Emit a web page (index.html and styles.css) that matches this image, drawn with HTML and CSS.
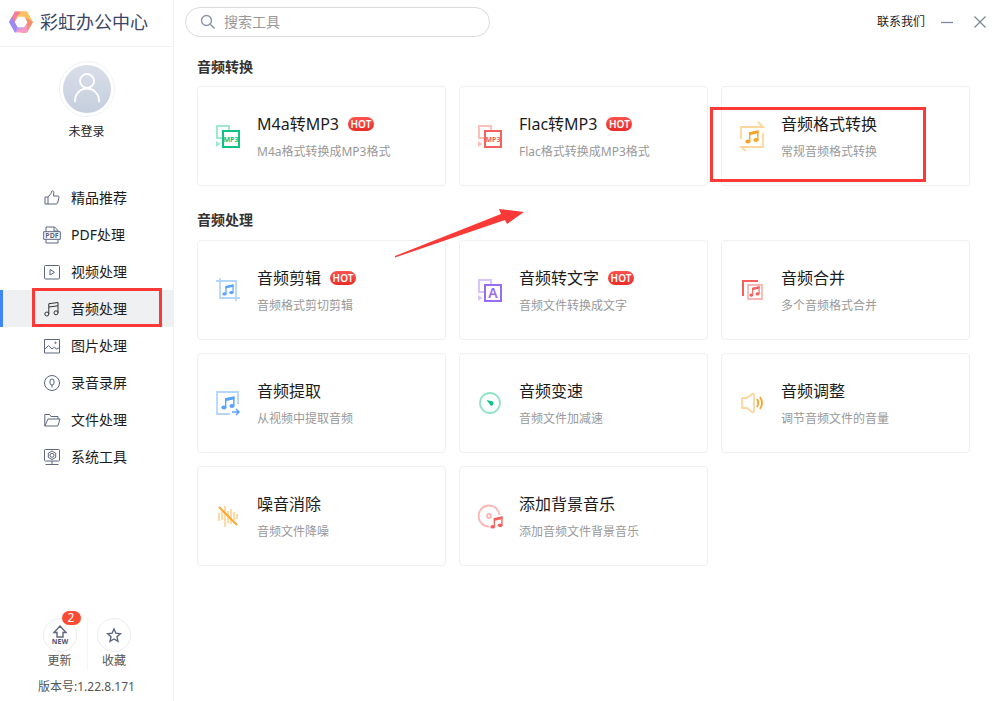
FILE: index.html
```html
<!DOCTYPE html>
<html lang="zh-CN">
<head>
<meta charset="utf-8">
<meta name="viewport" content="width=device-width, initial-scale=1">
<title>彩虹办公中心</title>
<link rel="stylesheet" href="styles.css">
</head>
<body>
<svg class="defs" aria-hidden="true">
  <symbol id="note" viewBox="0 0 12 12">
    <path d="M4 9.800V2.500l7-1.600v7.600" fill="none" stroke="currentColor" stroke-width="1.200"/>
    <path d="M3.500 2.200l8-1.800v2.400l-8 1.800z" fill="currentColor"/>
    <ellipse cx="2.500" cy="9.900" rx="2.200" ry="1.700" fill="currentColor"/>
    <ellipse cx="9.400" cy="8.600" rx="2.200" ry="1.700" fill="currentColor"/>
  </symbol>
  <symbol id="swap" viewBox="0 0 26 26">
    <path d="M7 15H2V3h12v4" fill="none" stroke="currentColor" stroke-width="2" opacity=".4"/>
    <path d="M1 18l4.500 3L1 24z" fill="currentColor" opacity=".4"/>
    <path d="M8 8h16v16H8z" fill="none" stroke="currentColor" stroke-width="2"/>
  </symbol>
</svg>
<div class="app">
  <aside class="sidebar">
    <div class="brand">
      <svg class="logo" viewBox="0 0 24 24" aria-hidden="true">
        <path d="M6 1.500h12L15 7H9L6 14 0.500 12z" fill="#f8a57f"/>
        <path d="M18 1.500L24 12l-4 5-3.500-10L9 7l-3-5.500z" fill="#fbc060"/>
        <path d="M24 12l-6 10.500-6 .5 5-6 1.500-5-3-5z" fill="#f88b6b"/>
        <path d="M18 22.500H6L3.500 17H15l3.500-5z" fill="#f59ac0"/>
        <path d="M6 22.500L0 12l4-5 3.500 10H15z" fill="#c79af4"/>
        <path d="M0 12L6 1.500 12 2 7 7l-1.500 5 3 5z" fill="#f37d9c"/>
        <path d="M0 12l3-5 2.500 5 3 5L6 22.500z" fill="#9a8cf4"/>
        <path d="M9 6.800h6l3.200 5.200-3.200 5.200H9L5.800 12z" fill="#fff"/>
      </svg>
      <h1 class="brand-name">彩虹办公中心</h1>
    </div>
    <div class="user">
      <button class="avatar" type="button" aria-label="登录">
        <svg viewBox="0 0 48 48" fill="none" stroke="#fff" stroke-width="1.800" stroke-linecap="round" aria-hidden="true">
          <circle cx="24" cy="16" r="7"/><path d="M12 36.500v-1a12 12 0 0 1 24 0v1"/>
        </svg>
      </button>
      <span class="user-name">未登录</span>
    </div>
    <nav class="nav">
      <a class="nav-item" href="#"><svg viewBox="0 0 18 18"><path d="M2 8h3v7H2zM5 8l3-3.500.6-2.200c.2-.9 2.400-.7 2.200 1.200L10.500 7H15q1.300.2 1 1.500l-1.400 5.500q-.4 1-1.500 1H5"/></svg>精品推荐</a>
      <a class="nav-item" href="#"><svg viewBox="0 0 18 18"><path d="M3 5.500V1h8.500L15 4.500v1M11 1v4h4M3 13.500V17h12v-3.500M.7 5.700h16.600v7.600H.7z"/><text x="9" y="12" text-anchor="middle" class="pdf-label">PDF</text></svg>PDF处理</a>
      <a class="nav-item" href="#"><svg viewBox="0 0 18 18"><rect x="1.500" y="2.500" width="15" height="13.500" rx="1"/><path d="M7 6.500v5.500l4.500-2.700z"/></svg>视频处理</a>
      <a class="nav-item active" href="#" aria-current="page"><svg viewBox="0 0 18 18"><circle cx="3.800" cy="14" r="2"/><circle cx="13" cy="12.800" r="2"/><path d="M5.800 14V3.700L15 2.500v10.300M5.800 7L15 5.800"/></svg>音频处理<span class="mark nav-mark"></span></a>
      <a class="nav-item" href="#"><svg viewBox="0 0 18 18"><path d="M1.500 2.500h15v13.500h-15zM1.500 12.500l4-4 3.500 3.500 2.500-2 2 2.200 3-1.700"/><circle cx="12.500" cy="5.800" r=".7"/></svg>图片处理</a>
      <a class="nav-item" href="#"><svg viewBox="0 0 18 18"><circle cx="9" cy="9" r="7.500"/><rect x="7" y="5" width="4" height="6" rx="2"/><path d="M9 11v2.500"/></svg>录音录屏</a>
      <a class="nav-item" href="#"><svg viewBox="0 0 18 18"><path d="M1.800 15V3.500h4.700L8 5.500h7V8M1.800 15L5 8h12l-2.200 7z"/></svg>文件处理</a>
      <a class="nav-item" href="#"><svg viewBox="0 0 18 18"><rect x="1.500" y="1.500" width="15" height="11.500" rx=".8"/><path d="M9 13v3.500M2.500 16.500h13"/><path d="M9 3l3.700 2.200v4.200L9 11.500 5.300 9.400V5.200z"/><circle cx="9" cy="7.300" r="2"/></svg>系统工具</a>
    </nav>
    <footer class="side-foot">
      <div class="quick">
        <button class="quick-item" type="button">
          <span class="ring">
            <svg viewBox="0 0 24 24" aria-hidden="true"><path d="M12 3l6 6.500h-3V14H9V9.500H6z"/><text x="12" y="21" text-anchor="middle" class="new-label">NEW</text></svg>
            <span class="count">2</span>
          </span>
          更新
        </button>
        <button class="quick-item" type="button">
          <span class="ring">
            <svg viewBox="0 0 24 24" aria-hidden="true"><path d="M12 6l1.900 4.200 4.500.5-3.400 3.100 1 4.500-4-2.300-4 2.300 1-4.500-3.400-3.100 4.500-.5z"/></svg>
          </span>
          收藏
        </button>
      </div>
      <p class="version">版本号:1.22.8.171</p>
    </footer>
  </aside>

  <main class="main">
    <header class="topbar">
      <label class="search">
        <svg viewBox="0 0 16 16" aria-hidden="true"><circle cx="6.500" cy="6.500" r="5"/><path d="M10.300 10.300l4.200 4.200"/></svg>
        <input type="text" placeholder="搜索工具" aria-label="搜索工具">
      </label>
      <div class="window-tools">
        <a class="contact" href="#">联系我们</a>
        <button class="win-btn" type="button" aria-label="最小化"><svg viewBox="0 0 14 14"><path d="M1 7.500h12"/></svg></button>
        <button class="win-btn" type="button" aria-label="关闭"><svg viewBox="0 0 14 14"><path d="M1.500 1.500l11 11M12.500 1.500l-11 11"/></svg></button>
      </div>
    </header>

    <section class="group">
      <h2 class="group-title">音频转换</h2>
      <div class="grid">
        <button class="card" type="button">
          <svg class="icon green" viewBox="0 0 26 26"><use href="#swap"/><text x="16" y="19" text-anchor="middle" class="mp3-label">MP3</text></svg>
          <span class="info"><span class="name">M4a转MP3<span class="hot">HOT</span></span><span class="desc">M4a格式转换成MP3格式</span></span>
        </button>
        <button class="card" type="button">
          <svg class="icon red" viewBox="0 0 26 26"><use href="#swap"/><text x="16" y="19" text-anchor="middle" class="mp3-label">MP3</text></svg>
          <span class="info"><span class="name">Flac转MP3<span class="hot">HOT</span></span><span class="desc">Flac格式转换成MP3格式</span></span>
        </button>
        <button class="card" type="button">
          <svg class="icon orange" viewBox="0 0 26 26"><path class="soft" d="M2 16V4h22l-5-5M24 10v14H2l5 4"/><use href="#note" x="6" y="7" width="14" height="14"/></svg>
          <span class="info"><span class="name">音频格式转换</span><span class="desc">常规音频格式转换</span></span>
          <span class="mark card-mark"></span>
        </button>
      </div>
    </section>

    <section class="group">
      <h2 class="group-title">音频处理</h2>
      <div class="grid">
        <button class="card" type="button">
          <svg class="icon blue" viewBox="0 0 26 26"><path class="soft" d="M5 1v20h20M1 4h20v20"/><use href="#note" x="7" y="7" width="12" height="12"/></svg>
          <span class="info"><span class="name">音频剪辑<span class="hot">HOT</span></span><span class="desc">音频格式剪切剪辑</span></span>
        </button>
        <button class="card" type="button">
          <svg class="icon purple" viewBox="0 0 26 26"><use href="#swap"/><text x="16" y="21" text-anchor="middle" class="a-label">A</text></svg>
          <span class="info"><span class="name">音频转文字<span class="hot">HOT</span></span><span class="desc">音频文件转换成文字</span></span>
        </button>
        <button class="card" type="button">
          <svg class="icon red" viewBox="0 0 26 26"><path d="M4 19V4h15" fill="none" stroke="currentColor" stroke-width="2"/><path class="soft" d="M9 8h14v14H9z"/><use href="#note" x="10" y="9" width="11" height="11"/></svg>
          <span class="info"><span class="name">音频合并</span><span class="desc">多个音频格式合并</span></span>
        </button>
        <button class="card" type="button">
          <svg class="icon blue" viewBox="0 0 26 26"><path class="soft" d="M23 14V2H2v22h13"/><path d="M17 22h7M21 19l3 3-3 3" fill="none" stroke="currentColor" stroke-width="1.500"/><use href="#note" x="6" y="6" width="14" height="14"/></svg>
          <span class="info"><span class="name">音频提取</span><span class="desc">从视频中提取音频</span></span>
        </button>
        <button class="card" type="button">
          <svg class="icon green" viewBox="0 0 26 26"><circle class="soft" cx="13" cy="13" r="10"/><path d="M9.500 10l6.500 1.500q1.500 3.500-2 4.500z" fill="currentColor"/></svg>
          <span class="info"><span class="name">音频变速</span><span class="desc">音频文件加减速</span></span>
        </button>
        <button class="card" type="button">
          <svg class="icon orange" viewBox="0 0 26 26"><path class="soft" stroke-linejoin="round" d="M3 8h5l5-4q2-1 2 1v16q0 2-2 1l-5-4H3z"/><path d="M18 9q2.500 4 0 8M21 7q4 6 0 12" fill="none" stroke="currentColor" stroke-width="1.800"/></svg>
          <span class="info"><span class="name">音频调整</span><span class="desc">调节音频文件的音量</span></span>
        </button>
        <button class="card" type="button">
          <svg class="icon orange" viewBox="0 0 26 26"><path class="soft" d="M4 10v8M7 8v9M10 3v21M13 8v12M16 6v15M19 9v8M22 11v5"/><path d="M4 4l18 18" stroke="currentColor" stroke-width="1.800"/></svg>
          <span class="info"><span class="name">噪音消除</span><span class="desc">音频文件降噪</span></span>
        </button>
        <button class="card" type="button">
          <svg class="icon red" viewBox="0 0 26 26"><path class="soft" d="M12 23.500A10.500 10.500 0 1 1 22.500 12"/><circle class="soft" cx="12" cy="13" r="2"/><use href="#note" x="13" y="13" width="13" height="13"/></svg>
          <span class="info"><span class="name">添加背景音乐</span><span class="desc">添加音频文件背景音乐</span></span>
        </button>
      </div>
      <svg class="arrow" viewBox="0 0 130 50" aria-hidden="true"><path d="M0 48L106 6l-2-5 25 3-17 12-2-4L0 49.500z" fill="#fb3a37"/></svg>
    </section>
  </main>
</div>
</body>
</html>
```
FILE: styles.css
```css
* { box-sizing: border-box; }
body {
  margin: 0;
  background: #fff;
  color: #1c1c1c;
  font-family: "Noto Sans", "Noto Sans CJK SC", sans-serif;
  font-size: 12px;
  line-height: 18px;
}
button { margin: 0; padding: 0; border: 0; background: none; color: inherit; font: inherit; cursor: pointer; }
a { color: inherit; text-decoration: none; }
.defs { position: absolute; width: 0; height: 0; }
.app { display: flex; min-height: 100vh; }

.sidebar {
  display: flex;
  flex-direction: column;
  flex: none;
  width: 174px;
  border-right: 1px solid #f0f1f3;
}
.brand {
  display: flex;
  align-items: center;
  gap: 7px;
  height: 47px;
  padding: 0 0 3px 9px;
  border-bottom: 1px solid #f0f1f3;
}
.logo { width: 24px; height: 24px; }
.brand-name { margin: 0; font-size: 18px; font-weight: 400; line-height: 24px; color: #3a4666; }
.user { display: flex; flex-direction: column; align-items: center; gap: 6px; padding: 14px 0 38px; }
.avatar { display: flex; width: 56px; height: 56px; padding: 3px; border: 1px solid #f0f2f8; border-radius: 50%; }
.avatar svg { width: 48px; height: 48px; border-radius: 50%; background: linear-gradient(#d9dfe9, #c5cede); }

.nav-item {
  position: relative;
  display: flex;
  align-items: center;
  gap: 10px;
  height: 37px;
  padding-left: 43px;
  font-size: 14px;
}
.nav-item svg { width: 18px; height: 18px; fill: none; stroke: #5c6680; stroke-width: 1; }
.nav-item .pdf-label { font-size: 7px; font-weight: 700; fill: #5c6680; stroke: none; }
.nav-item.active { background: #eff0f2; box-shadow: inset 3px 0 #3e87f8; }
.nav-item.active svg { stroke: #333; }
.mark { position: absolute; border: 3px solid #fb3a37; pointer-events: none; }
.nav-mark { inset: -2px 11px 0 32px; }

.side-foot { margin-top: auto; padding-bottom: 5px; text-align: center; color: #555; }
.quick { display: flex; justify-content: center; }
.quick-item { display: flex; flex-direction: column; align-items: center; width: 54px; }
.quick-item + .quick-item { border-left: 1px solid #f6f6f8; }
.ring { position: relative; display: grid; place-items: center; width: 34px; height: 34px; border: 1px solid #ececf0; border-radius: 50%; }
.ring svg { width: 24px; height: 24px; fill: none; stroke: #5c6680; stroke-width: 1.4; }
.ring .new-label { font-size: 7px; font-weight: 700; fill: #4c5775; stroke: none; }
.count {
  position: absolute;
  top: -8px;
  right: -5px;
  width: 19px;
  height: 14px;
  border-radius: 7px;
  background: #fb4b32;
  color: #fff;
  line-height: 14px;
}
.version { margin: 8px 0 0; }

.main { flex: 1; min-width: 0; padding-bottom: 24px; }
.topbar { display: flex; align-items: center; justify-content: space-between; height: 43px; padding: 0 13px 0 11px; }
.search {
  display: flex;
  align-items: center;
  gap: 8px;
  width: 305px;
  height: 30px;
  padding: 0 14px;
  border: 1px solid #d9dadc;
  border-radius: 15px;
}
.search svg { flex: none; width: 16px; height: 16px; fill: none; stroke: #8a94ab; stroke-width: 1.4; }
.search input { flex: 1; min-width: 0; padding: 0; border: 0; outline: 0; background: none; font: inherit; font-size: 14px; }
.search input::placeholder { color: #999; opacity: 1; }
.window-tools { display: flex; align-items: center; gap: 19px; }
.contact { margin-right: -4px; }
.win-btn { display: flex; }
.win-btn svg { width: 14px; height: 14px; fill: none; stroke: #7d869b; stroke-width: 1.3; }

.group { position: relative; padding: 14px 30px 0 23px; }
.group + .group { padding-top: 24px; }
.group-title { margin: 0 0 9px; font-size: 14px; font-weight: 700; line-height: 20px; color: #333; }
.grid { display: grid; grid-template-columns: repeat(3, 1fr); gap: 13px; }
.group + .group .group-title { margin-bottom: 10px; }
.card {
  position: relative;
  display: flex;
  align-items: center;
  gap: 16px;
  min-height: 100px;
  padding-left: 17px;
  border: 1px solid #efefef;
  border-radius: 4px;
  text-align: left;
}
.icon { flex: none; width: 26px; height: 26px; overflow: visible; }
.icon .soft { fill: none; stroke: currentColor; stroke-width: 1.8; opacity: .45; }
.green { color: #0fc285; }
.red { color: #f4605c; }
.orange { color: #fba326; }
.blue { color: #58a2fa; }
.purple { color: #9a6cf0; }
.mp3-label { font-size: 7px; font-weight: 700; fill: currentColor; }
.a-label { font-size: 14px; font-weight: 600; fill: currentColor; }
.info { display: flex; flex-direction: column; gap: 7px; }
.name { display: flex; align-items: center; gap: 9px; font-size: 16px; line-height: 24px; }
.desc { color: #999; }
.hot {
  width: 26px;
  height: 14px;
  border-radius: 7px;
  background: linear-gradient(#fb5350, #e92d28);
  color: #fff;
  font-size: 10px;
  font-weight: 600;
  line-height: 14px;
  text-align: center;
}
.card-mark { top: 20px; left: -12px; width: 216px; height: 75px; }
.arrow { position: absolute; top: 22px; left: 221px; width: 130px; height: 50px; pointer-events: none; }
```
